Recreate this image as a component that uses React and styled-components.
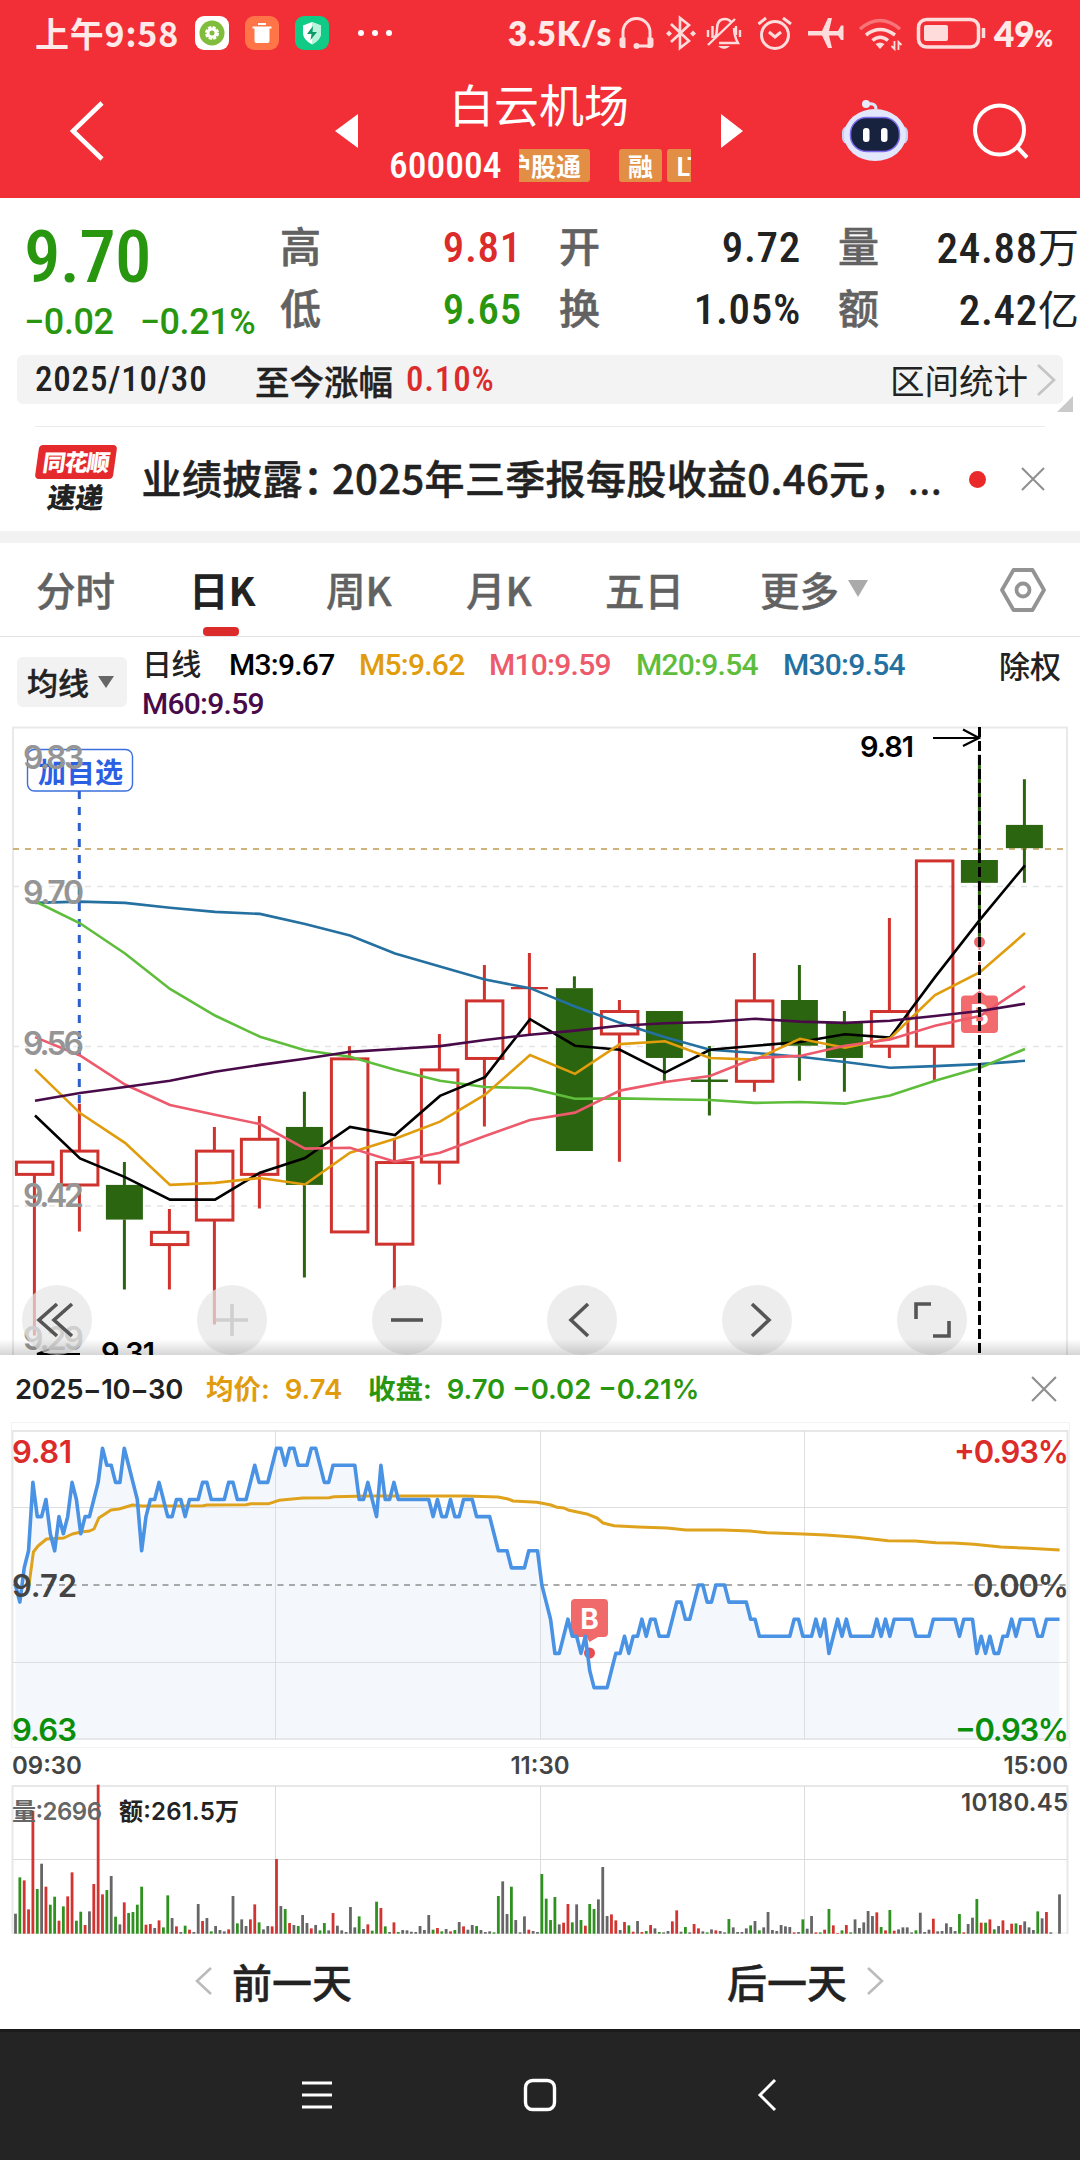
import React from "react";
import styled, { createGlobalStyle } from "styled-components";

const CJK = `"Noto Sans CJK SC", sans-serif`;
const RED = "#dc2b2b";
const GREEN = "#28970f";

// candles: [high, top of body, bottom of body, low, colour], in chart units
const CANDLES = [
  [1082, 1082, 1112, 1508, "r"],
  [940, 1055, 1138, 1253, "r"],
  [1083, 1139, 1224, 1395, "g"],
  [1198, 1254, 1284, 1395, "r"],
  [997, 1055, 1224, 1481, "r"],
  [970, 1026, 1112, 1197, "r"],
  [911, 997, 1139, 1366, "g"],
  [799, 829, 1253, 1253, "r"],
  [1026, 1083, 1283, 1395, "r"],
  [769, 856, 1082, 1138, "r"],
  [600, 687, 828, 996, "r"],
  [571, 657, 657, 769, "r"],
  [628, 657, 1056, 1056, "g"],
  [686, 713, 768, 1082, "r"],
  [713, 713, 828, 884, "g"],
  [799, 884, 884, 969, "g"],
  [571, 687, 884, 911, "r"],
  [600, 686, 798, 884, "g"],
  [713, 742, 828, 911, "g"],
  [485, 713, 798, 828, "r"],
  [344, 344, 798, 884, "r"],
  [85, 343, 399, 540, "g"],
  [145, 257, 314, 399, "g"],
];

const AVERAGES = [
  ["#2470a0", [448, 445, 448, 460, 470, 475, 500, 528, 572, 604, 636, 657, 702, 742, 777, 808, 816, 825, 838, 852, 848, 843, 835]],
  ["#5fbd3c", [444, 498, 572, 659, 724, 776, 809, 825, 857, 884, 899, 902, 928, 927, 929, 931, 938, 936, 940, 920, 884, 852, 806]],
  ["#000", [969, 1074, 1120, 1175, 1175, 1109, 1073, 997, 1017, 921, 875, 733, 798, 808, 864, 808, 798, 789, 770, 778, 630, 489, 356]],
  ["#e09c0c", [856, 963, 1036, 1139, 1134, 1122, 1138, 1060, 1026, 984, 918, 821, 867, 794, 787, 828, 832, 781, 803, 780, 674, 618, 522]],
  ["#ec5a6c", [777, 822, 893, 943, 967, 990, 1050, 1048, 1082, 1060, 1019, 980, 962, 908, 887, 872, 828, 823, 798, 783, 749, 725, 652]],
  ["#480a48", [933, 914, 899, 884, 862, 845, 830, 813, 806, 799, 784, 771, 761, 749, 743, 740, 732, 739, 742, 737, 725, 713, 695]],
];

// price through the day: [minute, cents above the previous close]
const MINUTES = [
  [0, 0], [1, -1], [2, 1], [3, 2], [4, 6], [5, 4], [6, 4], [7, 5], [8, 3], [9, 2], [10, 4], [11, 3], [12, 4], [13, 6], [14, 5],
  [15, 3], [16, 4], [17, 4], [18, 5], [19, 6], [20, 8], [21, 7], [22, 7], [23, 6], [24, 6], [25, 8], [26, 7], [27, 6], [28, 5],
  [29, 2], [30, 4], [31, 5], [32, 5], [33, 6], [34, 5], [35, 4], [36, 4], [37, 5], [38, 5], [39, 4], [40, 5], [42, 5], [43, 6],
  [44, 6], [45, 5], [48, 5], [49, 6], [50, 6], [51, 5], [53, 5], [54, 6], [55, 7], [56, 6], [58, 6], [59, 7], [60, 8], [61, 8],
  [62, 7], [63, 8], [64, 8], [65, 7], [67, 7], [68, 8], [69, 8], [70, 7], [71, 6], [72, 6], [73, 7], [78, 7], [79, 5], [80, 5],
  [81, 6], [82, 5], [83, 4], [84, 7], [85, 5], [86, 5], [87, 6], [88, 5], [95, 5], [96, 4], [97, 5], [98, 4], [99, 4], [100, 5],
  [101, 4], [102, 4], [103, 5], [105, 5], [106, 4], [109, 4], [110, 3], [111, 2], [113, 2], [114, 1], [117, 1], [118, 2],
  [120, 2], [121, 0], [122, -1], [123, -2], [124, -4], [125, -4], [126, -3], [127, -2], [128, -3], [129, -3], [130, -4],
  [131, -3], [132, -5], [133, -6], [136, -6], [137, -5], [138, -4], [139, -4], [140, -3], [141, -4], [142, -3], [143, -3],
  [144, -2], [145, -3], [146, -2], [147, -2], [148, -3], [150, -3], [151, -2], [152, -1], [153, -1], [154, -2], [155, -2],
  [156, -1], [157, 0], [158, 0], [159, -1], [160, -1], [161, 0], [163, 0], [164, -1], [168, -1], [169, -2], [170, -2],
  [171, -3], [178, -3], [179, -2], [180, -2], [181, -3], [183, -3], [184, -2], [185, -3], [186, -2], [187, -4], [188, -3],
  [189, -2], [190, -3], [191, -2], [192, -3], [197, -3], [198, -2], [199, -3], [200, -2], [201, -3], [202, -2], [206, -2],
  [207, -3], [210, -3], [211, -2], [216, -2], [217, -3], [218, -2], [220, -2], [221, -4], [222, -3], [223, -4], [224, -3],
  [225, -4], [226, -4], [227, -3], [228, -3], [229, -2], [230, -3], [231, -2], [234, -2], [235, -3], [236, -3], [237, -2],
  [240, -2],
];

const AVG_LINE =
  "29,1585 33.4,1552 38,1546 46.5,1539 63.7,1538 72.3,1534 81,1532 89.5,1531 94,1529 98.8,1518 111,1510 119,1509 132.6,1505 142,1506 203,1505.7 207,1505 246,1504.7 251,1503.7 269,1503.7 279,1500.3 303,1498 329,1497.7 334,1496.7 368,1496 465,1496 498,1497 508,1499 513,1501 537,1502.3 551,1505 557,1507.3 564,1508 569,1510.3 588,1514.3 597,1518 603,1523 614,1525.7 638,1527 667,1528 686,1530 722,1530 750,1531 767,1532.7 803,1534 826,1535 857,1537.3 888,1540.7 915,1541 936,1542.7 953,1543 974,1544.3 1001,1547 1029,1548.3 1059.6,1550";

// volume per minute; each entry is a colour letter and a height
const VOLUME = `k60 g169 r160 r73 r369 g134 k210 r141 g87 g111 r39 g82 r112 r184 g39 g66 r26 k67 r149 r447 r118 g131 k173 g51 k28 r94 g62 g65 g87 g141
r27 r29 k17 r40 g19 g115 k47 r22 k5 g24 r12 k5 k89 r38 k47 g7 k23 k11 k7 r13 k113 g31 k43 k23 r43 r88 g34 k13 k23 r22
r224 k83 g74 r32 k26 g23 k56 k32 r16 k26 g10 g32 k10 r62 k24 k10 k5 k80 k19 g52 k14 r28 g9 g96 r77 g22 k5 r34 g5 k11
k10 k6 k5 k23 k11 k56 g12 r17 g7 k14 r7 g11 k35 r22 k12 k26 g23 k11 k5 k7 g4 g113 k157 k59 g141 k41 k4 k52 r12 k8
k5 g179 g105 g41 g110 k28 r33 r89 g34 k88 g41 r24 g89 g74 k103 k200 k53 r58 r40 k11 r35 g25 r6 k38 r5 g8 r26 k16 g5 k4
k8 r37 r70 k6 g20 k4 r29 r16 k7 g4 k13 r10 k8 k4 g44 k19 k5 k5 k16 g25 k38 g10 k19 k65 k11 k8 k26 k22 k20 r4
k5 g43 k15 k53 r4 g4 r12 g74 r25 r2 g10 r26 g4 k43 k17 k34 k68 k53 r64 g20 r10 g71 r9 k13 k19 k19 k4 g10 k63 k5
k12 r45 k7 k8 k31 k20 k8 g59 r4 k29 k48 g104 r33 g33 r43 g13 k23 r40 k11 r30 g31 r26 k37 k19 k11 g67 k46 r65 k4 k0 k118`
  .split(/\s+/)
  .map((s) => [s[0], Number(s.slice(1))]);

const BAR = { r: "#d23431", g: "#2f9120", k: "#666" };

const candleX = (i) => 34.4 + i * 45;
const candleY = (v) => 720 + v / 2.45;
const minuteX = (i) => 15.5 + i * 4.35;

function DailyChart() {
  return (
    <ChartSvg height="635" viewBox="0 720 1080 635">
      <rect x="13" y="727.500" width="1054" height="700" fill="none" stroke="#e9e9e9" strokeWidth="2" />
      {[886.5, 1046.5, 1206].map((y) => (
        <path key={y} d={`M13 ${y}H1067`} stroke="#e4e4e4" strokeWidth="1.3" strokeDasharray="6 6" />
      ))}
      <path d="M13 849H1063" stroke="#c09a50" strokeWidth="1.7" strokeDasharray="6 6" />

      <rect x="27.500" y="749.5" width="105" height="41.500" rx="7" fill="#fff" stroke="#3a6fdd" strokeWidth="1.4" />
      <text x="38" y="782.500" fontSize="28" fontWeight="700" fill="#2b60e4" fontFamily={CJK} textLength="85">
        加自选
      </text>
      <path d="M79.300 791V1103" stroke="#2b5fd0" strokeWidth="3" strokeDasharray="8 8" />

      {CANDLES.map(([high, top, bottom, low, c], i) => {
        const x = candleX(i);
        const color = c === "r" ? "#d0332e" : "#2c650f";
        const y1 = candleY(top);
        const y2 = candleY(bottom);
        return (
          <g key={i} stroke={color} strokeWidth="3" fill="none">
            <path d={`M${x} ${candleY(high)}V${y1}M${x} ${y2}V${candleY(low)}`} />
            {top === bottom && <path d={`M${x - 18.5} ${y1}h37`} strokeWidth="2.400" />}
            {top !== bottom && c === "r" && <rect x={x - 18} y={y1 + 0.5} width="36.500" height={y2 - y1} />}
            {top !== bottom && c === "g" && (
              <rect x={x - 18.5} y={y1} width="37" height={y2 - y1} fill={color} stroke="none" />
            )}
          </g>
        );
      })}

      <circle cx="979.500" cy="942" r="5.500" fill="#ef6468" />
      <path d="M979.500 946V991" stroke="#ef6468" strokeWidth="2" strokeDasharray="4 4" />
      <path d="M965 995.500h8l6.500-5 6.500 5h8a4 4 0 0 1 4 4v29.500a4 4 0 0 1-4 4h-29a4 4 0 0 1-4-4v-29.500a4 4 0 0 1 4-4z" fill="#f26b6e" />
      <text x="979.500" y="1025" fontSize="28" fontWeight="700" fill="#fff" fontFamily="Inter, sans-serif" textAnchor="middle">
        B
      </text>

      {AVERAGES.map(([color, values]) => (
        <polyline
          key={color}
          points={values.map((v, i) => `${candleX(i) + 0.6},${candleY(v)}`).join(" ")}
          fill="none"
          stroke={color}
          strokeWidth="2.600"
        />
      ))}

      <path d="M979.500 727V1355" stroke="#000" strokeWidth="3" strokeDasharray="10 4" />
      <path d="M933 738H978M963 729.500L979 738L963 746" stroke="#000" strokeWidth="2.200" fill="none" />
      <DarkLabel x="860" y="757" textLength="54">9.81</DarkLabel>
      <DarkLabel x="101" y="1363" textLength="54">9.31</DarkLabel>
      <path d="M80 1354H37L50 1349" stroke="#000" strokeWidth="2" fill="none" />
      <AxisLabel x="23" y="769" textLength="61">9.83</AxisLabel>
      <AxisLabel x="23" y="904" textLength="61">9.70</AxisLabel>
      <AxisLabel x="23" y="1055" textLength="61">9.56</AxisLabel>
      <AxisLabel x="23" y="1207" textLength="61">9.42</AxisLabel>
      <AxisLabel x="23" y="1350" textLength="61">9.29</AxisLabel>
    </ChartSvg>
  );
}

function MinuteChart() {
  const line = MINUTES.map(([m, c]) => `${minuteX(m)},${1585 - c * 17.1}`).join(" ");
  return (
    <ChartSvg height="328" viewBox="0 1421 1080 328">
      <rect x="11.500" y="1422.500" width="1058" height="325" fill="none" stroke="#f3f3f3" />
      <polygon points={`15.5,1739 ${line} 1059.6,1739`} fill="#f4f8fd" />
      <g stroke="#dcdee0" fill="none">
        <rect x="12.500" y="1431" width="1055" height="308" stroke="#e6e7e9" strokeWidth="2" />
        <path d="M13 1507.500H1067M13 1662.500H1067M275.500 1431V1739M540.500 1431V1739M804.500 1431V1739" />
      </g>
      <path d="M13 1585H1067" stroke="#8d8d8d" strokeWidth="1.500" strokeDasharray="6 5.500" />
      <polyline points={AVG_LINE} fill="none" stroke="#dfa21c" strokeWidth="3" strokeLinejoin="round" />
      <path d="M575 1599h29a4 4 0 0 1 4 4v30a4 4 0 0 1-4 4h-6l-8.500 5-3-5H575a4 4 0 0 1-4-4v-30a4 4 0 0 1 4-4z" fill="#f0696b" />
      <text x="589.500" y="1628.500" fontSize="28" fontWeight="700" fill="#fff" fontFamily="Inter, sans-serif" textAnchor="middle">
        B
      </text>
      <circle cx="589.500" cy="1653" r="5.500" fill="#ea4b4d" />
      <polyline points={line} fill="none" stroke="#4a92e4" strokeWidth="3.600" strokeLinejoin="round" />
      <PriceLabel x="12" y="1463" fill={RED} textLength="60">9.81</PriceLabel>
      <PriceLabel x="12" y="1597" fill="#444" textLength="65">9.72</PriceLabel>
      <PriceLabel x="12" y="1741" fill="#0a8f0a" textLength="65">9.63</PriceLabel>
      <PriceLabel x="954" y="1463" fill={RED} textLength="115">+0.93%</PriceLabel>
      <PriceLabel x="973" y="1597" fill="#444" textLength="96">0.00%</PriceLabel>
      <PriceLabel x="955" y="1741" fill="#0a8f0a" textLength="114">−0.93%</PriceLabel>
    </ChartSvg>
  );
}

function VolumeChart() {
  return (
    <ChartSvg height="150" viewBox="0 1784 1080 150">
      <g stroke="#dcdcdc" fill="none">
        <path d="M12.500 1934V1786H1067.500V1934" stroke="#e8e8e8" strokeWidth="2" />
        <path d="M12 1933H1068" stroke="#e8e8e8" />
        <path d="M13 1859.500H1067M275.500 1786V1934M540.500 1786V1934M804.500 1786V1934" />
      </g>
      {VOLUME.map(([c, h], i) => (
        <rect key={i} x={minuteX(i) - 1.4} y={1933.7 - h / 3} width="2.800" height={h / 3} fill={BAR[c]} />
      ))}
      <VolumeLabel x="12" y="1820" fill="#666" textLength="90">量:2696</VolumeLabel>
      <VolumeLabel x="119" y="1820" fill="#222" textLength="120">额:261.5万</VolumeLabel>
      <VolumeLabel x="961" y="1811" fill="#444" textLength="107">10180.45</VolumeLabel>
    </ChartSvg>
  );
}

function StatusIcons() {
  return (
    <svg width="370" height="40" viewBox="616 13 370 40" fill="none" stroke="#ffdcdc" strokeWidth="3">
      <path d="M623 39V32a13.500 13.500 0 0 1 27 0v14H637" />
      <path d="M619.500 39.500q0-2 2-2h4v10.500h-3q-3 0-3-3zM653.500 39.500q0-2-2-2h-4v10.500h3q3 0 3-3z" fill="#ffdcdc" stroke="none" />
      <circle cx="636.500" cy="46" r="3" fill="#ffdcdc" stroke="none" />
      <path d="M671 24L689 41L680 48V18L689 25L671 42" strokeWidth="2.600" />
      <path d="M669 30.500l3 3-3 3-3-3zM693 30.500l3 3-3 3-3-3z" fill="#ffdcdc" stroke="none" />
      <path d="M714 39Q717 35 717 29Q717 19 725 19Q729 19 731 22M734 28Q734 36 738 43H719M708 45L735 19M708 30v7M712.500 26v12M740 30v7M736 26v9" strokeWidth="2.400" />
      <path d="M718 46h12q-6 6-12 0z" fill="#ffdcdc" stroke="none" />
      <circle cx="775" cy="35" r="13.500" />
      <path d="M769 32L775 37L781 32M758.500 24L766 18M783 18L791 24" />
      <path d="M808 31h14L828 18h4L829 31h9L841 25.500h2.500V40h-2.500L838 35.500h-9L832 48h-4L822 35.500H808z" fill="#ffdcdc" stroke="none" />
      <path d="M860 29Q880 12 900 29" opacity=".4" strokeWidth="3.500" />
      <path d="M866 35Q880 24 895 35M872.500 40.500Q880 34 888 40.500" strokeWidth="3.500" />
      <path d="M875.500 44q4.500-3 9 0l-4.500 5z" fill="#ffdcdc" stroke="none" />
      <path d="M894.500 41v8l-3-3M898.500 50v-8l3 3" strokeWidth="1.800" />
      <rect x="918.500" y="19.500" width="60" height="27.500" rx="8" strokeWidth="3.500" />
      <rect x="924" y="25" width="24" height="16" rx="2" fill="#ffdcdc" stroke="none" />
      <path d="M983.500 28v10" strokeWidth="3.500" />
    </svg>
  );
}

function RobotIcon() {
  return (
    <svg width="68" height="64" viewBox="841 98 68 64">
      <path d="M866 103.500Q876 101 876 108" stroke="#dfe4fb" strokeWidth="3" fill="none" />
      <circle cx="866" cy="103" r="4" fill="#e8ecff" />
      <rect x="842" y="125" width="12" height="18" rx="6" fill="#c9d0f6" />
      <rect x="896" y="125" width="12" height="18" rx="6" fill="#c9d0f6" />
      <ellipse cx="875" cy="134" rx="31" ry="26" fill="#e3e7fc" />
      <rect x="850.500" y="116.500" width="49" height="34" rx="16" fill="#17223f" stroke="#7b6cf0" strokeWidth="1.500" />
      <rect x="863" y="127" width="6.500" height="14" rx="3" fill="#fff" />
      <rect x="881" y="127" width="6.500" height="14" rx="3" fill="#fff" />
    </svg>
  );
}

const CloseIcon = ({ size }) => (
  <svg width={size} height={size} viewBox="0 0 24 24" stroke="#8f8f8f" strokeWidth="2">
    <path d="M1 1L23 23M23 1L1 23" />
  </svg>
);

// round buttons that float over the daily chart
const TOOLS = [
  "M15 -16L-3 0L15 16M0 -16L-18 0L0 16",
  "M-16 0H16M0 -16V16",
  "M-16 0H16",
  "M6 -16L-11 0L6 16",
  "M-5 -16L12 0L-5 16",
  "M-16 -1V-16H-1M17 1V16H1",
];

const TABS = [
  ["分时", 153],
  ["日K", 137],
  ["周K", 140],
  ["月K", 139],
  ["五日", 155],
];

export default function App() {
  return (
    <Page>
      <GlobalStyle />
      <StatusBar>
        <Clock>上午9:58</Clock>
        <AppBadge $bg="#fff">
          <svg width="34" height="34" viewBox="0 0 34 34">
            <circle cx="17" cy="17" r="12.500" fill="#80bd3d" />
            <circle cx="17" cy="17" r="5.500" fill="none" stroke="#fff" strokeWidth="3" strokeDasharray="3 1.300" />
            <circle cx="17" cy="17" r="4" fill="none" stroke="#fff" strokeWidth="3" />
          </svg>
        </AppBadge>
        <AppBadge $bg="#ff7547">
          <svg width="34" height="34" viewBox="0 0 34 34" fill="#fff">
            <path d="M13 7h8v2h-8zM7.500 10.500h19v2h-2V25q0 2-2 2h-11q-2 0-2-2V12.500h-2z" />
          </svg>
        </AppBadge>
        <AppBadge $bg="#10cb86">
          <svg width="34" height="34" viewBox="0 0 34 34">
            <path d="M17 6l9 3.500v8q0 6-9 11-9-5-9-11v-8z" fill="#fff" />
            <path d="M17 6l9 3.500v8q0 6-9 11z" fill="#b9f3dc" />
            <path d="M18 10l-6 8h4.500l-1 6 6.500-8h-4.500z" fill="#0a9c68" />
          </svg>
        </AppBadge>
        <Dots><i /><i /><i /></Dots>
        <Speed>3.5K/s</Speed>
        <StatusIcons />
        <Battery>49<small>%</small></Battery>
      </StatusBar>

      <Header>
        <HeaderSide $left>
          <svg width="34" height="60" viewBox="0 0 34 60" fill="none" stroke="#fff" strokeWidth="4.600">
            <path d="M32 2L3 30L32 58" />
          </svg>
          <Arrow $left />
        </HeaderSide>
        <Title>
          <h1>白云机场</h1>
          <CodeRow>
            <Code>600004</Code>
            <Tags>
              <Tag $cut>沪股通</Tag>
              <Tag>融</Tag>
              <Tag>LT</Tag>
            </Tags>
          </CodeRow>
        </Title>
        <HeaderSide>
          <Arrow />
          <RobotIcon />
          <svg width="58" height="60" viewBox="0 0 58 60" fill="none" stroke="#fff" strokeWidth="4">
            <circle cx="26.500" cy="29" r="24.500" />
            <path d="M44 46L54 56.500" />
          </svg>
        </HeaderSide>
      </Header>

      <Quote>
        <PriceBlock>
          <Price>9.70</Price>
          <Change><span>−0.02</span><span>−0.21%</span></Change>
        </PriceBlock>
        <Stat><label>高</label><Value $color={RED}>9.81</Value></Stat>
        <Stat><label>开</label><Value>9.72</Value></Stat>
        <Stat><label>量</label><Value>24.88<em>万</em></Value></Stat>
        <Stat><label>低</label><Value $color={GREEN}>9.65</Value></Stat>
        <Stat><label>换</label><Value>1.05%</Value></Stat>
        <Stat><label>额</label><Value>2.42<em>亿</em></Value></Stat>
      </Quote>

      <RangeBar>
        <RangeDate>2025/10/30</RangeDate>
        <RangeLabel>至今涨幅</RangeLabel>
        <RangeGain>0.10%</RangeGain>
        <RangeLink>区间统计</RangeLink>
        <svg width="20" height="34" viewBox="0 0 20 34" fill="none" stroke="#c4c4c4" strokeWidth="2.600">
          <path d="M2 2L18 17L2 32" />
        </svg>
        <Corner />
      </RangeBar>

      <News>
        <NewsLogo>
          <b>同花顺</b>
          <i>速递</i>
        </NewsLogo>
        <Headline>业绩披露<Colon>：</Colon>2025年三季报每股收益0.46元，<span>...</span></Headline>
        <RedDot />
        <CloseIcon size={24} />
      </News>

      <Tabs>
        {TABS.map(([name, width]) => (
          <Tab key={name} $width={width} $active={name === "日K"}>{name}</Tab>
        ))}
        <Tab $width={240}>更多<Caret $size={10} $height={17} $color="#aaa" /></Tab>
        <svg width="46" height="44" viewBox="0 0 46 44" fill="none" stroke="#939393" strokeWidth="3.800">
          <path d="M13.500 2h19L44 22L32.500 42h-19L2 22z" strokeLinejoin="round" />
          <circle cx="23" cy="22" r="6.500" />
        </svg>
      </Tabs>

      <Legend>
        <AverageButton>均线<Caret $size={8.5} $height={12} $color="#666" /></AverageButton>
        <LegendList>
          <LegendItem $color="#222" $width={87}>日线</LegendItem>
          <LegendItem $color="#000" $width={130}>M3:9.67</LegendItem>
          <LegendItem $color="#e09c0c" $width={130}>M5:9.62</LegendItem>
          <LegendItem $color="#ec5a6c" $width={147}>M10:9.59</LegendItem>
          <LegendItem $color="#5fbd3c" $width={147}>M20:9.54</LegendItem>
          <LegendItem $color="#2470a0" $width={147}>M30:9.54</LegendItem>
          <LegendItem $color="#480a48" $width={147}>M60:9.59</LegendItem>
        </LegendList>
        <Adjust>除权</Adjust>
      </Legend>

      <Daily>
        <DailyChart />
        <Tools>
          {TOOLS.map((d, i) => (
            <Tool key={d} $faint={i === 1}>
              <svg width="70" height="70" viewBox="-35 -35 70 70" fill="none" strokeWidth="3.600">
                <path d={d} />
              </svg>
            </Tool>
          ))}
        </Tools>
        <Shade />
      </Daily>

      <Sheet>
        <SheetHeader>
          <SheetText $color="#222" $width={191} $spacing={-0.4}>2025−10−30</SheetText>
          <SheetText $color="#e09c0c" $width={162}>均价: <span>9.74</span></SheetText>
          <SheetText $color={GREEN}>收盘: <span>9.70 −0.02 −0.21%</span></SheetText>
          <CloseIcon size={26} />
        </SheetHeader>
        <MinuteChart />
        <Times><span>09:30</span><span>11:30</span><span>15:00</span></Times>
        <VolumeChart />
        <DayNav>
          <DayButton $left={195}>
            <svg width="18" height="30" viewBox="0 0 18 30" fill="none" stroke="#bbb" strokeWidth="2.600"><path d="M16 2L2 15L16 28" /></svg>
            前一天
          </DayButton>
          <DayButton $left={187}>
            后一天
            <svg width="18" height="30" viewBox="0 0 18 30" fill="none" stroke="#bbb" strokeWidth="2.600"><path d="M2 2L16 15L2 28" /></svg>
          </DayButton>
        </DayNav>
      </Sheet>

      <SystemNav>
        <svg width="32" height="34" viewBox="0 0 32 34" stroke="#fff" strokeWidth="3"><path d="M1 5H31M1 17H31M1 29H31" /></svg>
        <svg width="34" height="34" viewBox="0 0 34 34" fill="none" stroke="#fff" strokeWidth="3.400"><rect x="2.500" y="2.500" width="29" height="29" rx="7" /></svg>
        <svg width="34" height="34" viewBox="0 0 34 34" fill="none" stroke="#fff" strokeWidth="3"><path d="M28 2L13 17L28 32" /></svg>
      </SystemNav>
    </Page>
  );
}

const GlobalStyle = createGlobalStyle`
  * { box-sizing: border-box; }
  body { margin: 0; background: #fff; }
  svg { display: block; flex: none; }
`;

const Page = styled.div`
  width: 1080px;
  height: 2160px;
  overflow: hidden;
  background: #fff;
  color: #222;
  font-family: ${CJK};
  font-weight: 500;
`;

const StatusBar = styled.div`
  display: flex;
  align-items: center;
  height: 66px;
  padding-left: 35px;
  background: #f22f36;
  color: #ffe9e9;
`;

const Clock = styled.div`
  width: 160px;
  font-size: 34px;
  line-height: 64px;
  font-weight: 700;
  letter-spacing: 0.8px;
  white-space: nowrap;
`;

const AppBadge = styled.div`
  width: 34px;
  height: 34px;
  margin-right: 16px;
  border-radius: 9px;
  background: ${(p) => p.$bg};
`;

const Dots = styled.div`
  display: flex;
  gap: 8px;
  width: 150px;
  margin-left: 13px;
  i {
    width: 6px;
    height: 6px;
    border-radius: 3px;
    background: #fff;
  }
`;

const Speed = styled.div`
  width: 108px;
  font: 800 33px Lato, sans-serif;
  letter-spacing: 0.9px;
  white-space: nowrap;
`;

const Battery = styled.div`
  padding-left: 8px;
  font: 800 35px Lato, sans-serif;
  white-space: nowrap;
  small {
    font-size: 22px;
  }
`;

const Header = styled.header`
  display: flex;
  height: 132px;
  background: #f22f36;
  color: #fff;
`;

const HeaderSide = styled.div`
  display: flex;
  align-items: center;
  flex: none;
  width: ${(p) => (p.$left ? 389 : 359)}px;
  padding: ${(p) => (p.$left ? "0 31px 3px 70px" : "0 0 2px 0")};
  justify-content: ${(p) => (p.$left ? "space-between" : "flex-start")};
  svg + svg {
    margin-left: 64px;
  }
`;

const Arrow = styled.div`
  flex: none;
  border: 17px solid transparent;
  border-width: 17px 0;
  ${(p) => (p.$left ? "border-right: 23px solid #fff;" : "border-left: 22px solid #fff; margin-right: 98px;")}
`;

const Title = styled.div`
  flex: none;
  width: 332px;
  h1 {
    margin: 9px 0 2px 60px;
    font-size: 45px;
    line-height: 58px;
    font-weight: 400;
  }
`;

const CodeRow = styled.div`
  display: flex;
  align-items: center;
  height: 60px;
`;

const Code = styled.div`
  width: 130px;
  font: 500 37.500px Roboto, sans-serif;
  font-stretch: 75%;
`;

const Tags = styled.div`
  display: flex;
  width: 172px;
  overflow: hidden;
`;

const Tag = styled.div`
  flex: none;
  height: 33px;
  margin-left: ${(p) => (p.$cut ? -22 : 0)}px;
  margin-right: ${(p) => (p.$cut ? 29 : 5)}px;
  padding: 0 9px;
  border-radius: 3px;
  background: #e28f45;
  font-size: 25px;
  line-height: 32px;
  font-weight: 700;
`;

const Quote = styled.section`
  display: grid;
  grid-template-columns: 243px repeat(3, 242px);
  grid-template-rows: 62px 62px;
  column-gap: 37px;
  height: 157px;
  padding-top: 18px;
`;

const PriceBlock = styled.div`
  grid-row: span 2;
  padding-left: 24px;
  color: ${GREEN};
  white-space: nowrap;
`;

const Price = styled.div`
  font: 500 73px/82px Roboto, sans-serif;
  font-stretch: 75%;
  letter-spacing: -0.8px;
`;

const Change = styled.div`
  display: flex;
  gap: 26px;
  font: 500 36px/48px Roboto, sans-serif;
  letter-spacing: -0.4px;
`;

const Stat = styled.div`
  display: flex;
  align-items: center;
  justify-content: space-between;
  label {
    position: relative;
    top: -3px;
    color: #626262;
    font-size: 41px;
    line-height: 62px;
    -webkit-text-stroke: 0.6px;
  }
`;

const Value = styled.div`
  color: ${(p) => p.$color || "#222"};
  font: 500 43px/60px Roboto, sans-serif;
  font-stretch: 75%;
  letter-spacing: 0.7px;
  white-space: nowrap;
  em {
    margin-right: 1px;
    font: 400 41px/56px ${CJK};
    letter-spacing: 0;
  }
`;

const RangeBar = styled.div`
  position: relative;
  display: flex;
  align-items: center;
  height: 49px;
  margin: 0 17px 22px;
  padding: 0 7px 0 18px;
  border-radius: 6px;
  background: #f3f3f3;
  svg {
    margin-left: 8px;
  }
`;

const RangeDate = styled.div`
  width: 220px;
  font: 500 35px Roboto, sans-serif;
  font-stretch: 75%;
  letter-spacing: 0.8px;
`;

const RangeLabel = styled.div`
  width: 151px;
  font-size: 34.500px;
  line-height: 46px;
  -webkit-text-stroke: 0.4px;
`;

const RangeGain = styled.div`
  flex: 1;
  color: ${RED};
  font: 500 35px Roboto, sans-serif;
  font-stretch: 75%;
  letter-spacing: 0.8px;
`;

const RangeLink = styled.div`
  font-size: 34.500px;
  line-height: 49px;
  font-weight: 400;
`;

const Corner = styled.div`
  position: absolute;
  right: -10px;
  bottom: -8px;
  border: 8.500px solid #cacaca;
  border-top-color: transparent;
  border-left-color: transparent;
`;

const News = styled.section`
  display: flex;
  align-items: center;
  height: 105px;
  margin: 0 35px;
  border-top: 1px solid #ebebeb;
`;

const NewsLogo = styled.div`
  width: 107px;
  padding-left: 2px;
  b,
  i {
    display: block;
    width: 78px;
    text-align: center;
    transform: skewX(-8deg);
    font-style: normal;
    font-weight: 900;
  }
  b {
    height: 34px;
    border-radius: 4px;
    background: #e52a2e;
    color: #fff;
    font-size: 23px;
    line-height: 33px;
    letter-spacing: -1px;
  }
  i {
    font-size: 28px;
    line-height: 34px;
  }
`;

const Headline = styled.div`
  width: 823px;
  padding-bottom: 5px;
  font-size: 40px;
  letter-spacing: 0.35px;
  white-space: nowrap;
  -webkit-text-stroke: 0.5px;
  span:last-child {
    margin-left: -2px;
    font-weight: 400;
  }
`;

const Colon = styled.span`
  letter-spacing: -11px;
`;

const RedDot = styled.div`
  width: 17px;
  height: 17px;
  margin: 0 35px 0 8px;
  border-radius: 50%;
  background: #ea2a2a;
`;

const Tabs = styled.nav`
  display: flex;
  align-items: center;
  height: 106px;
  padding-left: 36px;
  border-top: 12px solid #f2f2f2;
  border-bottom: 1px solid #e2e2e2;
`;

const Tab = styled.div`
  position: relative;
  display: flex;
  align-items: center;
  width: ${(p) => p.$width}px;
  height: 93px;
  padding-bottom: 3px;
  color: ${(p) => (p.$active ? "#222" : "#626262")};
  font-size: 39.500px;
  font-weight: ${(p) => (p.$active ? 700 : 500)};
  -webkit-text-stroke: ${(p) => (p.$active ? 0 : 0.4)}px;
  &::after {
    content: "";
    display: ${(p) => (p.$active ? "block" : "none")};
    position: absolute;
    left: 14px;
    bottom: 0;
    width: 36px;
    height: 9px;
    border-radius: 4px;
    background: ${RED};
  }
`;

const Caret = styled.span`
  margin-left: 9px;
  border: ${(p) => p.$size}px solid transparent;
  border-width: 0 ${(p) => p.$size}px;
  border-top: ${(p) => p.$height}px solid ${(p) => p.$color};
`;

const Legend = styled.div`
  display: flex;
  height: 83px;
  padding: 6px 0 0 17px;
`;

const AverageButton = styled.div`
  display: flex;
  align-items: center;
  width: 110px;
  height: 50px;
  margin: 14px 15px 0 0;
  padding-left: 10px;
  border-radius: 6px;
  background: #f2f2f2;
  font-size: 31px;
  line-height: 48px;
  -webkit-text-stroke: 0.4px;
`;

const LegendList = styled.div`
  display: flex;
  flex-wrap: wrap;
  width: 857px;
`;

const LegendItem = styled.div`
  width: ${(p) => p.$width}px;
  height: 39px;
  color: ${(p) => p.$color};
  font: 500 30px/43px Roboto, ${CJK};
  letter-spacing: -0.75px;
  white-space: nowrap;
`;

const Adjust = styled.div`
  font-size: 31px;
  line-height: 43px;
`;

const Daily = styled.section`
  position: relative;
  height: 635px;
  overflow: hidden;
`;

const ChartSvg = styled.svg`
  width: 1080px;
`;

const labelFont = `Inter, ${CJK}`;

const DarkLabel = styled.text`
  font: 600 29px ${labelFont};
  fill: #000;
`;

const AxisLabel = styled.text`
  font: 600 32px ${labelFont};
  fill: #959595;
`;

const PriceLabel = styled.text`
  font: 600 31px ${labelFont};
`;

const VolumeLabel = styled.text`
  font: 600 24px ${labelFont};
`;

const Tools = styled.div`
  position: absolute;
  left: 22px;
  bottom: 0;
  display: flex;
  gap: 105px;
`;

const Tool = styled.div`
  width: 70px;
  height: 70px;
  border-radius: 50%;
  background: rgba(230, 230, 230, 0.72);
  stroke: ${(p) => (p.$faint ? "#cfcfcf" : "#555")};
`;

const Shade = styled.div`
  position: absolute;
  left: 0;
  right: 0;
  bottom: 0;
  height: 16px;
  background: linear-gradient(rgba(0, 0, 0, 0), rgba(0, 0, 0, 0.16));
`;

const Sheet = styled.section`
  height: 674px;
  background: #fff;
`;

const SheetHeader = styled.div`
  display: flex;
  align-items: center;
  height: 66px;
  padding: 1px 23px 0 15px;
  svg {
    margin-left: auto;
  }
`;

const SheetText = styled.div`
  width: ${(p) => (p.$width ? `${p.$width}px` : "auto")};
  color: ${(p) => p.$color};
  font: 600 27.500px/40px Inter, ${CJK};
  letter-spacing: ${(p) => p.$spacing || 0}px;
  white-space: nowrap;
  span {
    margin-left: 8px;
  }
`;

const Times = styled.div`
  display: grid;
  grid-template-columns: repeat(3, 1fr);
  height: 35px;
  padding: 0 12px;
  color: #444;
  font: 600 24px/33px Inter, sans-serif;
  text-align: center;
  span:first-child {
    text-align: left;
  }
  span:last-child {
    text-align: right;
  }
`;

const DayNav = styled.div`
  display: flex;
  height: 95px;
`;

const DayButton = styled.div`
  display: flex;
  align-items: center;
  gap: 19px;
  width: 540px;
  padding: 0 0 2px ${(p) => p.$left}px;
  font-size: 40px;
  -webkit-text-stroke: 0.4px;
`;

const SystemNav = styled.nav`
  display: flex;
  align-items: center;
  justify-content: center;
  gap: 190px;
  height: 131px;
  padding: 0 0 2px 1px;
  border-top: 3px solid #1b1b1b;
  background: #242424;
`;
